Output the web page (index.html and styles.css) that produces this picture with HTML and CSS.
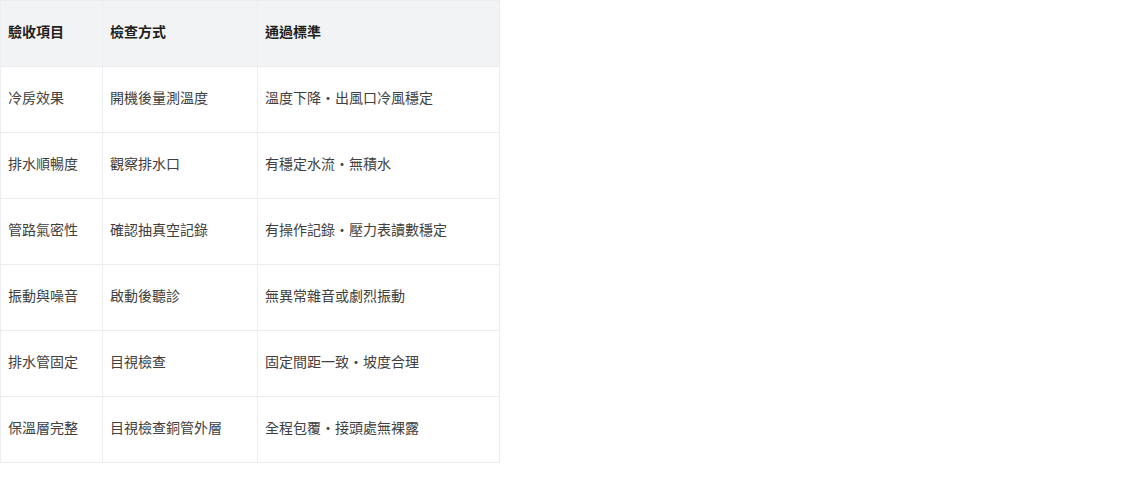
FILE: index.html
```html
<!DOCTYPE html>
<html lang="zh-TW">
<head>
<meta charset="utf-8">
<link rel="stylesheet" href="styles.css">
</head>
<body>
<table class="check-table">
  <colgroup>
    <col class="c1"><col class="c2"><col class="c3">
  </colgroup>
  <thead>
    <tr><th>驗收項目</th><th>檢查方式</th><th>通過標準</th></tr>
  </thead>
  <tbody>
    <tr><td>冷房效果</td><td>開機後量測溫度</td><td>溫度下降・出風口冷風穩定</td></tr>
    <tr><td>排水順暢度</td><td>觀察排水口</td><td>有穩定水流・無積水</td></tr>
    <tr><td>管路氣密性</td><td>確認抽真空記錄</td><td>有操作記錄・壓力表讀數穩定</td></tr>
    <tr><td>振動與噪音</td><td>啟動後聽診</td><td>無異常雜音或劇烈振動</td></tr>
    <tr><td>排水管固定</td><td>目視檢查</td><td>固定間距一致・坡度合理</td></tr>
    <tr><td>保溫層完整</td><td>目視檢查銅管外層</td><td>全程包覆・接頭處無裸露</td></tr>
  </tbody>
</table>
</body>
</html>
```
FILE: styles.css
```css
html, body {
  margin: 0;
  padding: 0;
  background: #fff;
}
body {
  font-family: "Noto Sans CJK TC", sans-serif;
  font-size: 14px;
  color: #404040;
}
.check-table {
  border-collapse: collapse;
  table-layout: fixed;
  width: 499px;
}
.c1 { width: 102px; }
.c2 { width: 155px; }
.c3 { width: 242px; }
.check-table th,
.check-table td {
  border: 1px solid #ebedf0;
  padding: 20px 7px 24px;
  line-height: 21px;
  text-align: left;
  vertical-align: top;
  white-space: nowrap;
}
.check-table th {
  background: #f2f3f5;
  font-weight: 700;
  color: #1f1f1f;
}
```
